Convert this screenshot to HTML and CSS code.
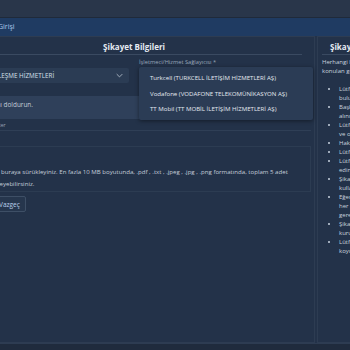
FILE: index.html
```html
<!DOCTYPE html>
<html lang="tr">
<head>
	<meta charset="utf-8">
	<title>Şikayet Girişi</title>
	<link rel="stylesheet" href="styles.css">
</head>
<body>
	<div class="topbar"></div>
	<div class="titlebar"><span>Şikayet Girişi</span></div>
	<div class="page">
		<div class="card main">
			<h2 class="cardTitle">Şikayet Bilgileri</h2>
			<div class="row">
				<div class="field">
					<label>Konu *</label>
					<div class="select">
						<span>HABERLEŞME HİZMETLERİ</span>
						<svg class="chev" viewBox="0 0 10 6" width="7" height="5"><path d="M1 1l4 4 4-4" fill="none" stroke="#aeb9c7" stroke-width="1.3"/></svg>
					</div>
				</div>
				<div class="field">
					<label>İşletmeci/Hizmet Sağlayıcısı *</label>
					<div class="select"></div>
					<ul class="menu">
						<li>Turkcell (TURKCELL İLETİŞİM HİZMETLERİ AŞ)</li>
						<li>Vodafone (VODAFONE TELEKOMÜNİKASYON AŞ)</li>
						<li>TT Mobil (TT MOBİL İLETİŞİM HİZMETLERİ AŞ)</li>
					</ul>
				</div>
			</div>
			<div class="textarea">Bu alanı doldurun.</div>
			<div class="counter">0 / 2000 karakter</div>
			<div class="sep"></div>
			<div class="drop">
				<p>Dosyaları buraya sürükleyiniz. En fazla 10 MB boyutunda, .pdf , .txt , .jpeg , .jpg , .png formatında, toplam 5 adet<br>dosya ekleyebilirsiniz.</p>
			</div>
			<div class="actions">
				<button class="btn">Vazgeç</button>
			</div>
		</div>
		<div class="card side">
			<h2 class="cardTitle">Şikayet Hakkında</h2>
			<p class="intro">Herhangi bir şikayet oluşturmadan önce aşağıda<br>konulan görüşleri dikkate alınız.</p>
			<ul class="rules">
				<li>Lütfen şikayetinizi yazarken<br>bulunduğunuz ili seçiniz.</li>
				<li>Başka kişilere ait bilgiler<br>alınmamalıdır.</li>
				<li>Lütfen şikayetinizi açık<br>ve okunaklı yazınız.</li>
				<li>Hakaret içermeyiniz.</li>
				<li>Lütfen tek konu yazınız.</li>
				<li>Lütfen kişisel bilgilerinize dikkat<br>ediniz.</li>
				<li>Şikayetinizde büyük harf<br>kullanmayınız.</li>
				<li>Eğer şikayetiniz birden fazlaysa<br>her biri için ayrı kayıt<br>gerekmektedir.</li>
				<li>Şikayetiniz ilgili<br>kuruma iletilecektir.</li>
				<li>Lütfen belge ekleyerek<br>koyunuz.</li>
			</ul>
		</div>
	</div>
	<div class="footer"></div>
</body>
</html>
```

FILE: styles.css
```css
*{box-sizing: border-box;}
html,body{margin: 0;padding: 0;}
body{width: 350px;height: 350px;overflow: hidden;background: #233249;font-family: "Open Sans", "Noto Sans", sans-serif;color: #c9d3df;font-size: 6px;}
.topbar{height: 18px;background: #29364a;border-bottom: 1px solid #1f2a3a;}
.titlebar{height: 18px;line-height: 18px;background: #1f3b62;color: #a9c6ec;font-size: 7px;margin-left: -27px;}
.page{display: flex;gap: 2px;height: 307px;margin-left: -45px;}
.card{border: 1px solid #2d3c52;background: #233249;}
.main{width: 360px;flex: none;padding: 2px 10px 0 10px;}
.side{flex: none;width: 200px;padding: 2px 4px 0 4px;}
.cardTitle{margin: 0;height: 16px;line-height: 16px;font-size: 8px;font-weight: bold;color: #e6ebf2;text-align: center;border-bottom: 1px solid #3a4a61;}
.main .cardTitle{margin-right: 2px;}
.row{display: flex;gap: 10px;margin-top: 3px;margin-right: 2px;}
.field{flex: 1;position: relative;}
.field label{display: block;height: 8px;line-height: 8px;font-size: 5.7px;color: #9aa7b8;}
.select{height: 15px;margin-top: 2px;background: #2b3c54;border-radius: 2px;display: flex;align-items: center;justify-content: space-between;padding: 0 6px 0 12px;font-size: 6.3px;color: #d8e0ea;}
.chev{display: block;}
.menu{position: absolute;left: 0;top: 9px;width: 174px;margin: 0;padding: 3px 0;list-style-type: none;background: #2b3c55;border-radius: 2px;box-shadow: 0 1px 4px rgba(0,0,0,0.45);}
.menu li{height: 15.5px;line-height: 15.5px;padding-left: 11px;font-size: 6.1px;color: #e4e9f0;white-space: nowrap;}
.textarea{height: 23px;margin-top: 13px;margin-right: 2px;background: #2f405a;border-radius: 2px;padding: 5px 12px;line-height: 8px;font-size: 6.4px;color: #c3cdd9;}
.counter{height: 10px;line-height: 10px;margin-top: 1px;font-size: 5px;color: #9aa7b8;}
.sep{height: 1px;background: #2f3f56;margin-right: -7px;}
.drop{margin-top: 15px;height: 46px;border: 1px solid #2c3c52;padding: 19px 0 0 6px;margin-right: -7px;}
.drop p{margin: 0;line-height: 12px;font-size: 6.1px;color: #c3cdd9;white-space: nowrap;}
.actions{padding-top: 4px;}
.btn{height: 16px;padding: 0 5px;border: 1px solid #3e4f66;border-radius: 2px;background: #26364d;color: #b9cdea;font-family: inherit;font-size: 6.5px;margin-left: 27px;}
.side .cardTitle{text-align: left;padding-left: 8px;}
.intro{margin: 3px 0 9px;line-height: 9px;font-size: 6px;color: #c9d3df;white-space: nowrap;}
.rules{margin: 0;padding-left: 17px;list-style-type: disc;}
.rules li{line-height: 9px;font-size: 6px;color: #c9d3df;white-space: nowrap;}
.footer{height: 7px;background: #1f2b3d;border-top: 1px solid #2d3c52;}
```
